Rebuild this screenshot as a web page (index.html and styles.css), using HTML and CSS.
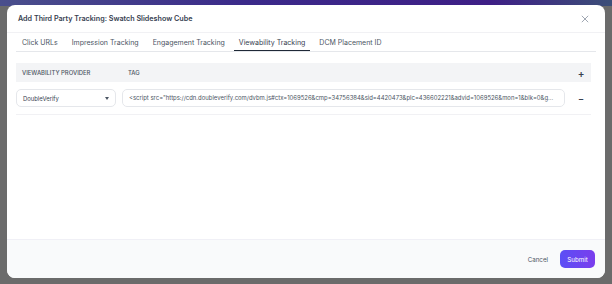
FILE: index.html
```html
<!DOCTYPE html>
<html lang="en">
<head>
    <meta charset="UTF-8">
    <title>Add Third Party Tracking</title>
    <link rel="stylesheet" href="styles.css">
</head>
<body>

<div class="backdrop">
    <div class="modal">
        <!-- Header -->
        <div class="modal-header">
            <h1>Add Third Party Tracking: Swatch Slideshow Cube</h1>
            <svg class="close" width="8" height="8" viewBox="0 0 10 10">
                <path d="M1 1L9 9M9 1L1 9" stroke="#9ca3af" stroke-width="1.2" fill="none"/>
            </svg>
        </div>

        <!-- Tabs -->
        <div class="tabs">
            <span class="tab">Click URLs</span>
            <span class="tab">Impression Tracking</span>
            <span class="tab">Engagement Tracking</span>
            <span class="tab active">Viewability Tracking</span>
            <span class="tab">DCM Placement ID</span>
        </div>

        <!-- Table -->
        <div class="body">
            <div class="thead">
                <span class="col-provider">Viewability Provider</span>
                <span class="col-tag">Tag</span>
                <span class="col-action plus">+</span>
            </div>
            <div class="row">
                <div class="select">
                    <span>DoubleVerify</span>
                    <span class="caret"></span>
                </div>
                <div class="tag-input">&lt;script src="https://cdn.doubleverify.com/dvbm.js#ctx=1069526&amp;cmp=34756384&amp;sid=4420473&amp;plc=436602221&amp;advid=1069526&amp;mon=1&amp;blk=0&amp;g...</div>
                <span class="col-action minus">&minus;</span>
            </div>
        </div>

        <!-- Footer -->
        <div class="modal-footer">
            <button class="cancel">Cancel</button>
            <button class="submit">Submit</button>
        </div>
    </div>
</div>

</body>
</html>
```

FILE: styles.css
```css
* { box-sizing: border-box; }
html, body {
    margin: 0;
    height: 100%;
}
body {
    font-family: Inter, "Noto Sans", sans-serif;
    background: linear-gradient(90deg, #4a4f8c 0%, #3b2a8a 40%, #3e1f86 80%, #3c4f78 100%) top / 100% 6px no-repeat, #6b6b6b;
    overflow: hidden;
}
.backdrop {
    padding: 5px 7px 0 7px;
    height: 100%;
}
.modal {
    background: #fff;
    border-radius: 8px;
    height: 273px;
    display: flex;
    flex-direction: column;
    overflow: hidden;
}
.modal-header {
    display: flex;
    align-items: center;
    justify-content: space-between;
    height: 28px;
    padding: 0 16px 0 11px;
    border-bottom: 1px solid #f1f1f4;
}
.modal-header h1 {
    margin: 0;
    font-size: 7.2px;
    font-weight: 600;
    color: #374151;
}
.tabs {
    display: flex;
    gap: 4px;
    margin: 0 9px 0 9px;
    padding-left: 1px;
    height: 19px;
    border-bottom: 1px solid #e5e7eb;
}
.tab {
    font-size: 7px;
    color: #4b5563;
    padding: 5px 5px 0 5px;
}
.tab.active {
    color: #374151;
    border-bottom: 1.5px solid #1f2937;
}
.body {
    flex: 1;
    padding: 11px 14px 0 9px;
}
.thead {
    display: flex;
    align-items: center;
    height: 19px;
    background: #f3f4f6;
    font-size: 5.9px;
    font-weight: 500;
    color: #4b5563;
    text-transform: uppercase;
}
.col-provider {
    width: 112px;
    padding-left: 6px;
}
.col-tag {
    flex: 1;
}
.col-action {
    width: 20px;
    margin-left: 6px;
    text-align: center;
    color: #374151;
    font-weight: 600;
}
.plus { font-size: 10px; }
.minus { font-size: 9px; }
.row {
    display: flex;
    align-items: center;
    height: 33px;
    border-bottom: 1px solid #f1f1f4;
}
.select {
    width: 100px;
    height: 18px;
    border: 1px solid #e5e7eb;
    border-radius: 5px;
    display: flex;
    align-items: center;
    justify-content: space-between;
    padding: 0 6px;
    font-size: 5.9px;
    color: #374151;
    margin-right: 6px;
}
.caret {
    width: 0;
    height: 0;
    border-left: 2.5px solid transparent;
    border-right: 2.5px solid transparent;
    border-top: 3px solid #4b5563;
}
.tag-input {
    flex: 1;
    min-width: 0;
    height: 18px;
    border: 1px solid #e5e7eb;
    border-radius: 5px;
    padding: 0 6px;
    font-size: 5.95px;
    line-height: 16px;
    color: #4b5563;
    white-space: nowrap;
    overflow: hidden;
}
.modal-footer {
    height: 39px;
    background: #f9fafb;
    border-top: 1px solid #f0f0f6;
    display: flex;
    align-items: center;
    justify-content: flex-end;
    padding: 0 10px 0 0;
    gap: 10px;
}
button {
    font-family: inherit;
    font-size: 6.2px;
    border: none;
    cursor: pointer;
}
.cancel {
    background: none;
    color: #4b5563;
    padding: 0 2px;
}
.submit {
    background: linear-gradient(90deg, #5b4ff5, #7a3ded);
    color: #fff;
    width: 35px;
    height: 18px;
    border-radius: 5px;
}
```
